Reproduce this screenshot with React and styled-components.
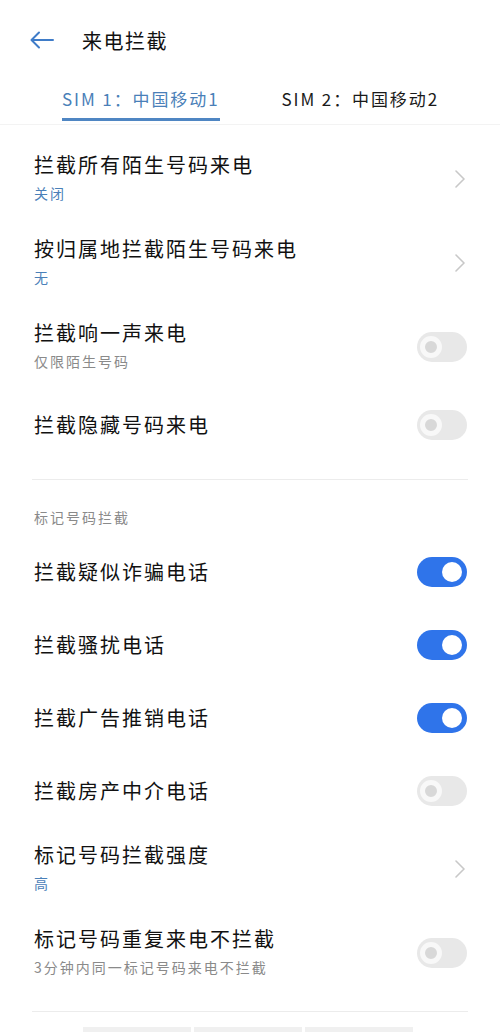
import React from 'react';
import styled, { createGlobalStyle } from 'styled-components';

// Page reset and base font
const GlobalStyle = createGlobalStyle`
  html, body {
    margin: 0;
    padding: 0;
    background: #ffffff;
    overflow: hidden;
  }
  body {
    font-family: "Noto Sans CJK SC", "Noto Sans", sans-serif;
    color: #111111;
  }
`;

const Page = styled.div`
  width: 500px;
  height: 1032px;
  overflow: hidden;
  background: #ffffff;
`;

// Top bar with back arrow and title
const Header = styled.div`
  height: 80px;
  display: flex;
  align-items: center;
  padding-left: 30px;
  gap: 28px;
`;

const BackButton = styled.div`
  width: 24px;
  height: 24px;
  display: flex;
  align-items: center;
  justify-content: center;
`;

const Title = styled.h1`
  margin: 0;
  font-size: 20px;
  font-weight: 400;
  letter-spacing: 1.5px;
  color: #111111;
`;

// SIM tabs
const Tabs = styled.div`
  display: flex;
  gap: 62px;
  padding-left: 62px;
  height: 44px;
  border-bottom: 1px solid #f3f3f3;
`;

const Tab = styled.div`
  display: flex;
  flex-direction: column;
  justify-content: space-between;
  padding-top: 7px;
  font-size: 17px;
  letter-spacing: 1.9px;
  line-height: 24px;
  color: ${({ active }) => (active ? '#4a7fb8' : '#1a1a1a')};

  &::after {
    content: '';
    display: block;
    height: 3px;
    margin-bottom: 3px;
    background: ${({ active }) => (active ? '#4f86c3' : 'transparent')};
  }
`;

const List = styled.div`
  padding-top: 12px;
`;

// A settings row; height depends on whether it has a second line
const Row = styled.div`
  display: flex;
  align-items: center;
  padding: 0 34px;
  height: ${({ h }) => h}px;
`;

const RowText = styled.div`
  flex: 1;
  display: flex;
  flex-direction: column;
`;

const RowTitle = styled.div`
  font-size: 20px;
  line-height: 28px;
  letter-spacing: 2px;
  color: #111111;
`;

const RowSub = styled.div`
  font-size: 14px;
  line-height: 28px;
  letter-spacing: 2px;
  color: ${({ accent }) => (accent ? '#4a80b8' : '#8a8a8a')};
`;

const Divider = styled.div`
  height: 1px;
  background: #ececec;
  margin: ${({ top }) => top}px 32px 0;
`;

const SectionHeader = styled.div`
  padding: 27px 34px 8px;
  font-size: 14px;
  line-height: 20px;
  letter-spacing: 2px;
  color: #8a8a8a;
`;

// Switch track and knob
const Track = styled.div`
  width: 50px;
  height: 30px;
  border-radius: 15px;
  background: ${({ on }) => (on ? '#2f74ea' : '#e8e8e8')};
  display: flex;
  align-items: center;
  justify-content: ${({ on }) => (on ? 'flex-end' : 'flex-start')};
  padding: 0 ${({ on }) => (on ? 5 : 3)}px;
  box-sizing: border-box;
  margin-right: -1px;
`;

const Knob = styled.div`
  width: ${({ on }) => (on ? 20 : 22)}px;
  height: ${({ on }) => (on ? 20 : 22)}px;
  border-radius: 50%;
  box-sizing: border-box;
  background: ${({ on }) => (on ? '#ffffff' : '#d8d8d8')};
  border: ${({ on }) => (on ? 'none' : '5px solid #f8f8f8')};
`;

const Chevron = styled.div`
  width: 12px;
  display: flex;
  justify-content: flex-end;
  margin-right: 1px;
`;

const BottomBar = styled.div`
  display: flex;
  gap: 3px;
  padding: 15px 0 0 83px;
`;

const BottomPiece = styled.div`
  width: 108px;
  height: 10px;
  background: #f0f0f0;
`;

const Switch = ({ on }) => (
  <Track on={on ? 1 : 0}>
    <Knob on={on ? 1 : 0} />
  </Track>
);

const Arrow = () => (
  <Chevron>
    <svg width="10" height="18" viewBox="0 0 10 18" fill="none">
      <path d="M1 1l8 8-8 8" stroke="#c8c8c8" strokeWidth="1.6" strokeLinecap="round" strokeLinejoin="round" />
    </svg>
  </Chevron>
);

const Item = ({ title, sub, accent, control, single = 72 }) => (
  <Row h={sub ? 84 : single}>
    <RowText>
      <RowTitle>{title}</RowTitle>
      {sub && <RowSub accent={accent ? 1 : 0}>{sub}</RowSub>}
    </RowText>
    {control === 'arrow' ? <Arrow /> : <Switch on={control === 'on'} />}
  </Row>
);

const App = () => {
  const general = [
    { title: '拦截所有陌生号码来电', sub: '关闭', accent: true, control: 'arrow' },
    { title: '按归属地拦截陌生号码来电', sub: '无', accent: true, control: 'arrow' },
    { title: '拦截响一声来电', sub: '仅限陌生号码', control: 'off' },
    { title: '拦截隐藏号码来电', control: 'off' },
  ];

  const marked = [
    { title: '拦截疑似诈骗电话', control: 'on' },
    { title: '拦截骚扰电话', control: 'on' },
    { title: '拦截广告推销电话', control: 'on' },
    { title: '拦截房产中介电话', control: 'off' },
    { title: '标记号码拦截强度', sub: '高', accent: true, control: 'arrow' },
    { title: '标记号码重复来电不拦截', sub: '3分钟内同一标记号码来电不拦截', control: 'off' },
  ];

  return (
    <>
      <GlobalStyle />
      <Page>
        <Header>
          <BackButton>
            <svg width="24" height="18" viewBox="0 0 24 18" fill="none">
              <path d="M23 9H2M9 1.5L1.5 9 9 16.5" stroke="#3f7cc8" strokeWidth="2" strokeLinecap="round" strokeLinejoin="round" />
            </svg>
          </BackButton>
          <Title>来电拦截</Title>
        </Header>
        <Tabs>
          <Tab active>SIM 1：中国移动1</Tab>
          <Tab>SIM 2：中国移动2</Tab>
        </Tabs>
        <List>
          {general.map((item, i) => (
            <Item key={i} {...item} />
          ))}
          <Divider top={18} />
          <SectionHeader>标记号码拦截</SectionHeader>
          {marked.map((item, i) => (
            <Item key={i} single={73} {...item} />
          ))}
          <Divider top={16} />
          <BottomBar>
            <BottomPiece />
            <BottomPiece />
            <BottomPiece />
          </BottomBar>
        </List>
      </Page>
    </>
  );
};

export default App;
